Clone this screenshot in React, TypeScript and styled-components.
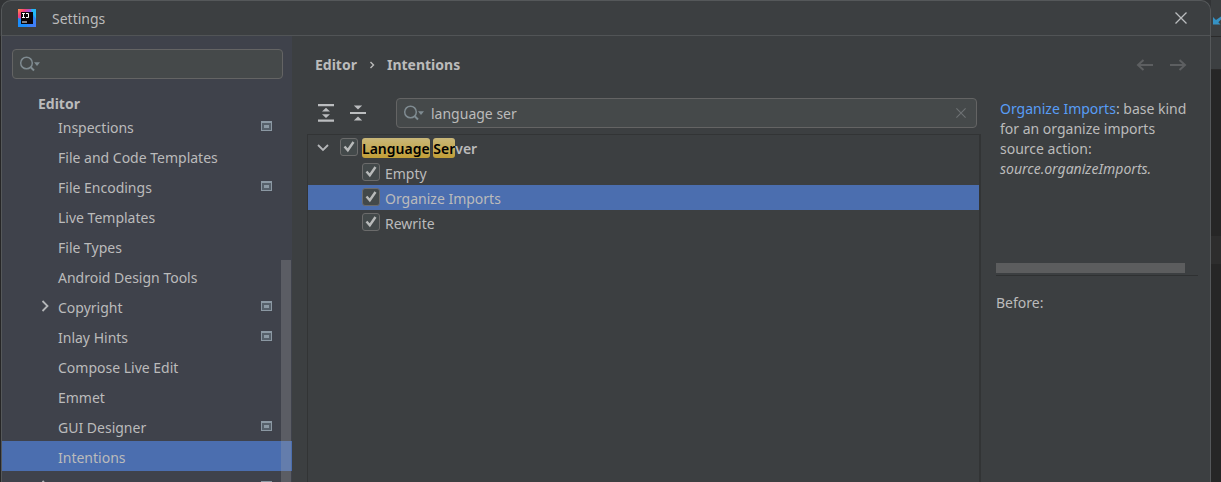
import React, { useState } from "react";
import styled, { createGlobalStyle, css } from "styled-components";

const GlobalStyle = createGlobalStyle`
  *, *::before, *::after { box-sizing: border-box; }
  body {
    margin: 0;
    background: #323436;
    color: #bbbbbb;
    font-family: "Noto Sans", "Open Sans", sans-serif;
    font-size: 14px;
    line-height: 20px;
  }
  button, input { font: inherit; color: inherit; }
`;

const Page = styled.div`
  display: flex;
  height: 100vh;
  overflow: hidden;
  background: linear-gradient(#323436 36px, #262626 36px);
`;

const Dialog = styled.div`
  flex: 1;
  min-width: 0;
  display: flex;
  flex-direction: column;
  margin-left: 1px;
  border: 1px solid #55585a;
  border-bottom: 0;
  border-radius: 10px 10px 0 0;
  background: #3c3f41;
  overflow: hidden;
`;

const Backdrop = styled.div`
  width: 10px;
  display: flex;
  flex-direction: column;
  background: #262626;
`;

const BackdropBar = styled.div<{ $height: number }>`
  flex: none;
  height: ${(p) => p.$height}px;
  background: #3c3f41;
  border-bottom: 1px solid #2b2b2b;
  display: flex;
  align-items: flex-end;
  padding: 0 0 11px 2px;
`;

const BackdropLine = styled.div`
  height: 28px;
  margin-top: 166px;
  background: #2d2d2d;
`;

const TitleBar = styled.header`
  flex: none;
  height: 35px;
  display: flex;
  align-items: center;
  padding: 0 23px 0 16px;
  border-bottom: 1px solid #515456;
`;

const Title = styled.h1`
  flex: 1;
  margin: 0 0 0 16px;
  padding-top: 2px;
  font-size: 14px;
  font-weight: 400;
`;

const IconButton = styled.button<{ $color?: string }>`
  display: flex;
  padding: 0;
  border: 0;
  background: none;
  color: ${(p) => p.$color ?? "#bbbdbf"};
`;

const Body = styled.div`
  flex: 1;
  min-height: 0;
  display: flex;
`;

const Sidebar = styled.nav`
  position: relative;
  flex: none;
  width: 290px;
  overflow: hidden;
  background: #3f424b;
`;

const SearchField = styled.div`
  height: 30px;
  display: flex;
  align-items: center;
  padding: 0 10px 0 6px;
  border: 1px solid #646464;
  border-radius: 4px;
  background: #45494a;
`;

const SidebarSearch = styled(SearchField)`
  margin: 13px 9px 0 10px;
`;

const TreeSearch = styled(SearchField)`
  flex: 1;
  min-width: 0;
`;

const SearchInput = styled.input`
  flex: 1;
  min-width: 0;
  height: 24px;
  padding: 0;
  margin-left: 7px;
  border: 0;
  outline: 0;
  background: none;
`;

const GroupTitle = styled.h2`
  margin: 15px 0 0 36px;
  height: 17px;
  font-size: 14px;
  line-height: 20px;
  font-weight: 700;
`;

const NavItem = styled.button<{ $selected?: boolean }>`
  width: 100%;
  height: 30px;
  display: flex;
  align-items: center;
  padding: 0 20px 0 39px;
  border: 0;
  text-align: left;
  background: ${(p) => (p.$selected ? "#4b6eaf" : "none")};
`;

const NavArrow = styled.span`
  width: 17px;
  display: flex;
`;

const NavLabel = styled.span`
  flex: 1;
  padding-top: 4px;
`;

const ScrollThumb = styled.div`
  position: absolute;
  top: 224px;
  right: 1px;
  bottom: 0;
  width: 10px;
  background: rgba(166, 166, 166, 0.28);
`;

const Main = styled.main`
  flex: 1;
  min-width: 0;
  display: flex;
  flex-direction: column;
  padding: 0 12px 0 15px;
`;

const Crumbs = styled.div`
  flex: none;
  height: 57px;
  display: flex;
  align-items: center;
  gap: 12px;
  padding: 0 11px 0 8px;
  font-weight: 700;
`;

const History = styled.div`
  margin-left: auto;
  display: flex;
  gap: 15px;
`;

const Columns = styled.div`
  flex: 1;
  min-height: 0;
  display: flex;
`;

const TreeColumn = styled.section`
  flex: 1;
  min-width: 0;
  display: flex;
  flex-direction: column;
`;

const Toolbar = styled.div`
  flex: none;
  height: 41px;
  display: flex;
  align-items: flex-start;
  padding: 5px 4px 0 8px;
`;

const ToolButtons = styled.div`
  height: 30px;
  display: flex;
  align-items: center;
  gap: 12px;
  padding: 0 28px 0 1px;
`;

const Tree = styled.div`
  flex: 1;
  border: 1px solid #323435;
  border-right-width: 2px;
  border-bottom: 0;
`;

const TreeRow = styled.div<{ $level: number; $selected?: boolean }>`
  height: 25px;
  display: flex;
  align-items: center;
  padding-left: ${(p) => (p.$level ? 54 : 9)}px;
  ${(p) =>
    p.$selected &&
    css`
      background: #4b6eaf;
    `}
`;

const CheckLabel = styled.label<{ $bold?: boolean }>`
  display: flex;
  align-items: center;
  gap: ${(p) => (p.$bold ? 4 : 5)}px;
  font-weight: ${(p) => (p.$bold ? 600 : 400)};
`;

const TreeText = styled.span`
  padding-top: 2px;
`;

const CheckBox = styled.span`
  display: grid;
  place-items: center;
  margin-bottom: 2px;
  input, svg { grid-area: 1 / 1; }
  svg { pointer-events: none; }
`;

const CheckInput = styled.input`
  appearance: none;
  width: 18px;
  height: 18px;
  margin: 0;
  border: 1px solid #6b6b6b;
  border-radius: 3px;
  background: #43494a;
`;

const Mark = styled.mark`
  padding-top: 1px;
  border-radius: 3px;
  color: #000;
  background: linear-gradient(#c9b779, #c29f37);
`;

const Details = styled.aside`
  flex: none;
  width: 217px;
  padding-left: 15px;
`;

const Description = styled.div`
  height: 183px;
  padding: 6px 0 0 4px;
  display: flex;
  flex-direction: column;
  justify-content: space-between;
  border-bottom: 1px solid #2f3132;
`;

const Paragraph = styled.p`
  margin: 0;
`;

const Link = styled.a`
  color: #589df6;
  text-decoration: none;
`;

const HorizontalThumb = styled.div`
  height: 10px;
  margin: 0 13px 2px -4px;
  background: #5c5d5e;
`;

const Before = styled.h3`
  margin: 17px 0 0;
  font-size: 14px;
  font-weight: 400;
`;

const Logo = () => (
  <svg width="18" height="18" viewBox="0 0 18 18">
    <defs>
      <linearGradient id="edge" x1="0" y1="0" x2="1" y2="1">
        <stop offset="0" stopColor="#ff9a4c" />
        <stop offset="0.2" stopColor="#fb3f74" />
        <stop offset="0.4" stopColor="#8a5be8" />
        <stop offset="0.5" stopColor="#1f8bfa" />
        <stop offset="1" stopColor="#4a7bf5" />
      </linearGradient>
    </defs>
    <rect width="18" height="18" fill="url(#edge)" />
    <path d="M13 0h5v10l-4-6z" fill="#22b8f7" />
    <path d="M0 9l3 1v5h6v3H0z" fill="#1a8dfb" />
    <rect x="3" y="3" width="12" height="12" fill="#0b0509" />
    <path d="M4 4.500h3M5.500 4.500v4M4 8.500h3M8 4.500h2.500v4h-2.500M4 13h5" fill="none" stroke="#fff" />
  </svg>
);

const CloseIcon = ({ size }: { size: number }) => (
  <svg width={size} height={size} viewBox="0 0 12 12" fill="none" stroke="currentColor" strokeWidth="1.300">
    <path d="M.5.5l11 11M11.500.5l-11 11" />
  </svg>
);

const SearchIcon = () => (
  <svg width="21" height="18" viewBox="0 0 21 18" fill="none">
    <circle cx="7.500" cy="8" r="5.800" stroke="#7f8b91" strokeWidth="1.500" />
    <path d="M11.500 12l3.500 3.500" stroke="#7f8b91" strokeWidth="2" />
    <path d="M15 7.300h6L18 11z" fill="#7f8b91" />
  </svg>
);

const ProjectIcon = () => (
  <svg width="11" height="10" viewBox="0 0 11 10">
    <path d="M0 0h11v10H0zM1 2v7h9V2z" fill="#8b98a3" fillRule="evenodd" />
    <path d="M1 2h9v7H1z" fill="#56606a" />
    <rect x="3" y="4" width="5" height="3" fill="#8b98a3" />
  </svg>
);

const Chevron = ({ down }: { down?: boolean }) => (
  <svg
    width={down ? 12 : 8}
    height={down ? 8 : 12}
    viewBox={down ? "0 0 12 8" : "0 0 8 12"}
    fill="none"
    stroke="#b4b6b8"
    strokeWidth="1.800"
  >
    <path d={down ? "M1 1l5 5 5-5" : "M1.500 1l5 5-5 5"} />
  </svg>
);

const CrumbArrow = () => (
  <svg width="6" height="8" viewBox="0 0 6 8" fill="none" stroke="#bbbbbb" strokeWidth="1.400">
    <path d="M1.500 1l3 3-3 3" />
  </svg>
);

const ArrowIcon = ({ forward }: { forward?: boolean }) => (
  <svg width="18" height="12" viewBox="0 0 18 12" fill="none" stroke="currentColor" strokeWidth="2">
    <path d={forward ? "M1 6h15M10.500 1l5.500 5-5.500 5" : "M17 6H2M7.500 1L2 6l5.500 5"} />
  </svg>
);

const ExpandIcon = () => (
  <svg width="20" height="20" viewBox="0 0 20 20" fill="currentColor">
    <path d="M2 1h16v2.200H2zM2 16.500h16v2.200H2zM10 4.700l4 3.800h-8zM10 15L6 11.200h8z" />
  </svg>
);

const CollapseIcon = () => (
  <svg width="20" height="20" viewBox="0 0 20 20" fill="currentColor">
    <path d="M2 8.900h16v2.200H2zM10 6.500L5.800 2.400h8.400zM10 13.500l4.200 4.100h-8.400z" />
  </svg>
);

const TickIcon = () => (
  <svg width="18" height="18" viewBox="0 0 18 18" fill="none" stroke="#b8baba" strokeWidth="2.400">
    <path d="M4.500 8.500l3.300 3.800L13.500 4" />
  </svg>
);

const IncomingIcon = () => (
  <svg width="8" height="9" viewBox="0 0 8 9">
    <path d="M0 1v7.500h7.500L5.300 6.200 8 3.500V.5L3 4z" fill="#3592c4" />
  </svg>
);

type NavEntry = { label: string; project?: boolean; nested?: boolean };

const navEntries: NavEntry[] = [
  { label: "Inspections", project: true },
  { label: "File and Code Templates" },
  { label: "File Encodings", project: true },
  { label: "Live Templates" },
  { label: "File Types" },
  { label: "Android Design Tools" },
  { label: "Copyright", project: true, nested: true },
  { label: "Inlay Hints", project: true },
  { label: "Compose Live Edit" },
  { label: "Emmet" },
  { label: "GUI Designer", project: true },
  { label: "Intentions" },
  { label: "", project: true, nested: true },
];

const Check = ({ bold, children }: { bold?: boolean; children: React.ReactNode }) => (
  <CheckLabel $bold={bold}>
    <CheckBox>
      <CheckInput type="checkbox" defaultChecked />
      <TickIcon />
    </CheckBox>
    <TreeText>{children}</TreeText>
  </CheckLabel>
);

const RootToggle = styled(IconButton)`
  margin-right: 11px;
`;

export default function App() {
  const [page, setPage] = useState("Intentions");
  const [query, setQuery] = useState("language ser");

  return (
    <>
      <GlobalStyle />
      <Page>
        <Dialog role="dialog" aria-label="Settings">
          <TitleBar>
            <Logo />
            <Title>Settings</Title>
            <IconButton aria-label="Close">
              <CloseIcon size={12} />
            </IconButton>
          </TitleBar>
          <Body>
            <Sidebar>
              <SidebarSearch>
                <SearchIcon />
                <SearchInput aria-label="Search settings" />
              </SidebarSearch>
              <GroupTitle>Editor</GroupTitle>
              {navEntries.map((entry) => (
                <NavItem
                  key={entry.label}
                  $selected={entry.label === page}
                  onClick={() => setPage(entry.label)}
                >
                  <NavArrow>{entry.nested && <Chevron />}</NavArrow>
                  <NavLabel>{entry.label}</NavLabel>
                  {entry.project && <ProjectIcon />}
                </NavItem>
              ))}
              <ScrollThumb />
            </Sidebar>
            <Main>
              <Crumbs>
                <span>Editor</span>
                <CrumbArrow />
                <span>Intentions</span>
                <History>
                  <IconButton $color="#5d5f61" aria-label="Back">
                    <ArrowIcon />
                  </IconButton>
                  <IconButton $color="#5d5f61" aria-label="Forward">
                    <ArrowIcon forward />
                  </IconButton>
                </History>
              </Crumbs>
              <Columns>
                <TreeColumn>
                  <Toolbar>
                    <ToolButtons>
                      <IconButton aria-label="Expand all">
                        <ExpandIcon />
                      </IconButton>
                      <IconButton aria-label="Collapse all">
                        <CollapseIcon />
                      </IconButton>
                    </ToolButtons>
                    <TreeSearch>
                      <SearchIcon />
                      <SearchInput
                        aria-label="Search intentions"
                        value={query}
                        onChange={(e) => setQuery(e.target.value)}
                      />
                      <IconButton $color="#6e7274" aria-label="Clear search" onClick={() => setQuery("")}>
                        <CloseIcon size={10} />
                      </IconButton>
                    </TreeSearch>
                  </Toolbar>
                  <Tree>
                    <TreeRow $level={0}>
                      <RootToggle aria-label="Collapse Language Server">
                        <Chevron down />
                      </RootToggle>
                      <Check bold>
                        <Mark>Language</Mark> <Mark>Ser</Mark>ver
                      </Check>
                    </TreeRow>
                    <TreeRow $level={1}>
                      <Check>Empty</Check>
                    </TreeRow>
                    <TreeRow $level={1} $selected>
                      <Check>Organize Imports</Check>
                    </TreeRow>
                    <TreeRow $level={1}>
                      <Check>Rewrite</Check>
                    </TreeRow>
                  </Tree>
                </TreeColumn>
                <Details>
                  <Description>
                    <Paragraph>
                      <Link href="#organize-imports">Organize Imports</Link>: base kind for an organize imports
                      source action: <em>source.organizeImports.</em>
                    </Paragraph>
                    <HorizontalThumb />
                  </Description>
                  <Before>Before:</Before>
                </Details>
              </Columns>
            </Main>
          </Body>
        </Dialog>
        <Backdrop>
          <BackdropBar $height={37}>
            <IncomingIcon />
          </BackdropBar>
          <BackdropBar $height={33} />
          <BackdropLine />
        </Backdrop>
      </Page>
    </>
  );
}
